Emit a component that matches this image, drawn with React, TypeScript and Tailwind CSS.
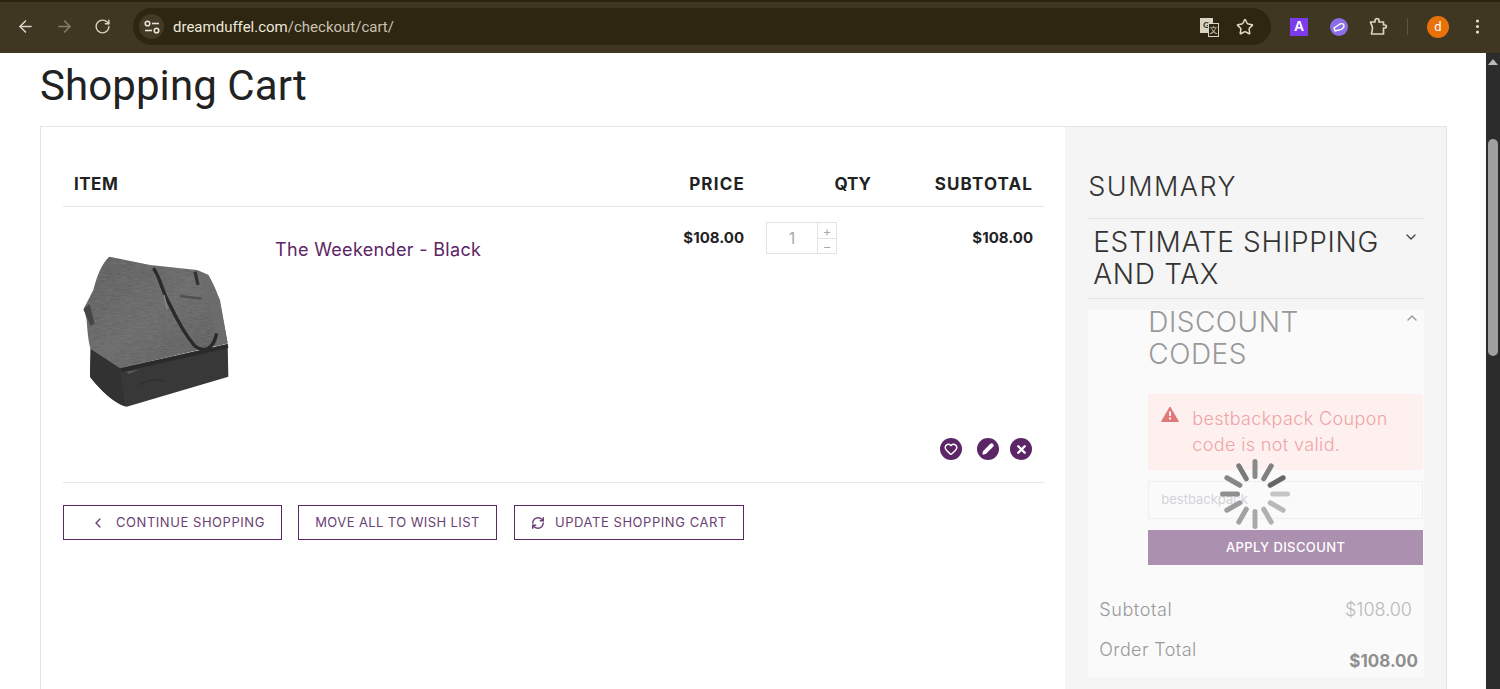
import { FC, ReactNode } from "react"
import { ArrowLeft, ArrowRight, RotateCw, Star, ChevronDown, ChevronUp, ChevronLeft, RefreshCw, Heart, Pencil, X, EllipsisVertical } from "lucide-react"

const mont = "font-['Inter','Open_Sans',sans-serif]"

// drawn in the crop's coordinates, hence the odd viewBox
const BagImage: FC = () => (
  <svg width="150" height="160" viewBox="63 90 450 480">
    <defs>
      <linearGradient id="body" x1="0" y1="0" x2="1" y2="1">
        <stop offset="0" stopColor="#5c5c5c" />
        <stop offset="0.5" stopColor="#6a6a6a" />
        <stop offset="1" stopColor="#5a5a5a" />
      </linearGradient>
      <filter id="heather" x="0" y="0" width="100%" height="100%">
        <feTurbulence type="fractalNoise" baseFrequency="0.05 0.5" numOctaves="2" seed="4" />
        <feColorMatrix values="0 0 0 0 0.25  0 0 0 0 0.25  0 0 0 0 0.25  0.6 0 0 0 -0.15" />
        <feComposite in2="SourceGraphic" operator="in" />
        <feMerge>
          <feMergeNode in="SourceGraphic" />
          <feMergeNode />
        </feMerge>
      </filter>
      <filter id="soft">
        <feGaussianBlur stdDeviation="1.6" />
      </filter>
    </defs>
    <g filter="url(#soft)">
      <path d="M148 110 L270 135 L410 150 L445 165 C465 200 478 230 484 270 L503 370 L180 445 L92 390 C84 360 82 330 80 300 L72 265 L100 210 C110 170 125 130 148 110 Z" fill="url(#body)" filter="url(#heather)" />
      <path d="M410 150 L445 165 L480 240 L503 370 L470 378 C468 310 440 220 410 150 Z" fill="#6c6c6c" />
      <path d="M92 388 L180 445 L503 372 L505 470 L200 560 C170 555 120 510 90 470 Z" fill="#383838" />
      <path d="M180 445 L503 372 L505 384 L185 456 Z" fill="#2a2a2a" />
      <path d="M92 388 L180 445 L195 558 C165 550 120 510 90 470 Z" fill="#303030" />
      <path d="M200 455 L240 448 L205 462 Z" fill="#5a5a5a" />
      <path d="M235 495 C260 480 300 475 315 485" fill="none" stroke="#2c2c2c" strokeWidth="3" />
      <path d="M280 145 C300 170 305 210 325 245 C345 285 370 340 405 378 C430 398 460 390 470 340" fill="none" stroke="#2a2a2a" strokeWidth="10" />
      <path d="M405 155 L414 195" fill="none" stroke="#333" strokeWidth="10" />
      <path d="M360 228 L425 236" fill="none" stroke="#505050" strokeWidth="7" />
      <path d="M312 225 L322 268" fill="none" stroke="#8a8a8a" strokeWidth="4" />
      <path d="M70 268 L88 252 L104 310 L92 318 Z" fill="#444" />
    </g>
  </svg>
)

const bars = [
  { r: 0, c: "#8a8a8a" },
  { r: 30, c: "#808080" },
  { r: 60, c: "#666666" },
  { r: 90, c: "#c6c6c6" },
  { r: 120, c: "#b8b8b8" },
  { r: 150, c: "#b0b0b0" },
  { r: 180, c: "#a9a9a9" },
  { r: 210, c: "#a2a2a2" },
  { r: 240, c: "#9c9c9c" },
  { r: 270, c: "#8f8f8f" },
  { r: 300, c: "#868686" },
  { r: 330, c: "#7a7a7a" },
]

const Spinner: FC = () => (
  <svg width="72" height="72" viewBox="0 0 72 72" className="absolute left-[1219px] top-[458px]">
    {bars.map((b) => (
      <rect key={b.r} x="33.5" y="1" width="5" height="20" rx="2.5" fill={b.c} transform={`rotate(${b.r} 36 36)`} />
    ))}
  </svg>
)

const OutlineButton: FC<{ value: string; icon?: ReactNode; className: string }> = ({ value, icon, className }) => (
  <button className={`h-[35px] border border-[#5b2566] flex items-center text-[13px] text-[#6a3f73] ${className}`}>
    {icon}
    {value}
  </button>
)

const Browser: FC = () => (
  <div className="h-[53px] bg-[#3f3722] flex items-center relative">
    <div className="absolute top-0 left-0 h-[2px] w-full bg-[#2a2410]" />
    <div className="flex items-center w-[133px] pl-[16px] gap-[20px] text-[#d8d3c3]">
      <ArrowLeft size={19} />
      <ArrowRight size={19} className="text-[#857e68]" />
      <RotateCw size={17} />
    </div>
    <div className="h-[37px] w-[1138px] rounded-full bg-[#2e2610] flex items-center pl-[6px]">
      <div className="w-[25px] h-[25px] rounded-full bg-[#423a25] flex items-center justify-center">
        <svg width="16" height="14" viewBox="0 0 16 14" fill="none" stroke="#e6e2d6" strokeWidth="1.6">
          <circle cx="3.5" cy="3.5" r="2.3" />
          <path d="M8 3.5 H15" />
          <path d="M1 10.5 H8" />
          <circle cx="12.5" cy="10.5" r="2.3" />
        </svg>
      </div>
      <span className="ml-[9px] pt-[1px] text-[15px] text-[#c8c3b2] font-['Roboto',sans-serif]">
        <span className="text-[#ece8dc]">dreamduffel.com</span>/checkout/cart/
      </span>
      <div className="ml-auto flex items-center gap-[16px] pr-[17px] text-[#e0dccd]">
        <div className="relative w-[20px] h-[20px] top-[1px]">
          <div className="absolute left-0 top-0 w-[13px] h-[15px] bg-[#d8d3c3] text-[9px] font-bold text-[#3f3722] text-center leading-[15px] font-['Liberation_Sans',sans-serif]">G</div>
          <div className="absolute left-[8px] top-[5px] w-[11px] h-[14px] border border-[#d8d3c3] bg-[#2e2610] text-[8px] text-[#d8d3c3] text-center leading-[12px] font-['Noto_Sans_CJK_SC',sans-serif]">文</div>
        </div>
        <Star size={18} />
      </div>
    </div>
    <div className="ml-[19px] w-[18px] h-[18px] bg-[#7c3aed] text-white text-[14px] font-bold flex items-center justify-center font-['Liberation_Sans',sans-serif]">A</div>
    <div className="ml-[22px] w-[18px] h-[18px] rounded-full bg-[#8b6fe8] flex items-center justify-center">
      <svg width="12" height="10" viewBox="0 0 12 10">
        <path d="M1 6 L7 2 C9 1 11 2 11 4 C11 6 8 8 6 8 L2 9 Z" fill="none" stroke="#fff" strokeWidth="1.4" />
      </svg>
    </div>
    <svg width="19" height="19" viewBox="0 0 19 19" fill="none" stroke="#d8d3c3" strokeWidth="1.7" strokeLinejoin="round" className="ml-[21px]">
      <path d="M1.5 5 H6 V3.5 C6 1 10 1 10 3.5 V5 H14.5 V8 H15.5 C18 8 18 11 15.5 11 H14.5 V17 H2.5 C2.5 15 3.5 14 3.5 11 C3.5 8 1.5 7 1.5 5 Z" />
    </svg>
    <div className="ml-[19px] w-px h-[17px] bg-[#5d5540]" />
    <div className="ml-[19px] w-[22px] h-[22px] rounded-full bg-[#e8710a] text-white text-[13px] flex items-center justify-center font-['Roboto',sans-serif]">d</div>
    <EllipsisVertical size={19} className="ml-[19px] text-[#e0dccd]" />
  </div>
)

const Cart: FC = () => (
  <div className={`w-[1025px] bg-white pt-[37px] pl-[22px] pr-[21px] ${mont}`}>
    <div className="flex items-center h-[43px] border-b border-[#e6e6e6] text-[17px] font-bold text-[#222]">
      <div className="pl-[11px] w-[585px] tracking-[0.5px]">ITEM</div>
      <div className="w-[97px] text-right tracking-[1.2px]">PRICE</div>
      <div className="w-[126px] text-right">QTY</div>
      <div className="w-[162px] text-right tracking-[1.1px]">SUBTOTAL</div>
    </div>
    <div className="flex h-[276px] border-b border-[#e6e6e6] relative">
      <div className="w-[212px] pl-[18px] pt-[43px]">
        <BagImage />
      </div>
      <div className="w-[373px] pt-[29px] text-[#5b2566] text-[18px] tracking-[0.33px]">The Weekender - Black</div>
      <div className="w-[96px] pt-[20px] text-right text-[15px] font-bold text-[#222]">$108.00</div>
      <div className="ml-[22px] mt-[15px] h-[32px] w-[71px] border border-[#e3e3e3] flex">
        <div className="w-[50px] flex items-center justify-center text-[#aaa] text-[16px]">1</div>
        <div className="flex-1 border-l border-[#e3e3e3] flex flex-col text-[#aaa] text-[13px] leading-[14px]">
          <div className="h-[16px] border-b border-[#e3e3e3] flex items-center justify-center">+</div>
          <div className="flex-1 flex items-center justify-center">−</div>
        </div>
      </div>
      <div className="ml-[90px] w-[106px] pt-[20px] text-right text-[15px] font-bold text-[#222]">$108.00</div>
      <div className="absolute right-[12px] top-[231px] flex gap-[13px]">
        <div className="w-[22px] h-[22px] rounded-full bg-[#5b2566] flex items-center justify-center text-white">
          <Heart size={14} strokeWidth={2.5} />
        </div>
        <div className="w-[22px] h-[22px] rounded-full bg-[#5b2566] flex items-center justify-center text-white ml-[2px]">
          <Pencil size={12} strokeWidth={2.5} fill="#fff" />
        </div>
        <div className="w-[22px] h-[22px] rounded-full bg-[#5b2566] flex items-center justify-center text-white -ml-[2px]">
          <X size={13} strokeWidth={4.5} />
        </div>
      </div>
    </div>
    <div className="flex gap-[16px] mt-[22px]">
      <OutlineButton className="w-[219px] pl-[26px] tracking-[0.55px]" value="CONTINUE SHOPPING" icon={<ChevronLeft size={16} className="mr-[10px]" />} />
      <OutlineButton className="w-[199px] justify-center tracking-[0.4px]" value="MOVE ALL TO WISH LIST" />
      <OutlineButton className="ml-[1px] w-[230px] pl-[16px] tracking-[0.55px]" value="UPDATE SHOPPING CART" icon={<RefreshCw size={14} strokeWidth={2.5} className="mr-[10px]" />} />
    </div>
  </div>
)

const Summary: FC = () => (
  <div className={`w-[381px] h-[563px] bg-[#f5f5f5] pl-[23px] pr-[22px] pt-[43px] ${mont}`}>
    <div className="text-[27px] font-light text-[#333] leading-[34px] h-[48px] tracking-[1.5px]">SUMMARY</div>
    <div className="border-t border-[#e4e4e4] border-b h-[81px] pl-[5px] pr-[5px] pt-[7px] flex justify-between">
      <div className="text-[28px] font-light leading-[32px] text-[#333] tracking-[0.7px]">ESTIMATE SHIPPING<br />AND TAX</div>
      <ChevronDown size={16} className="text-[#444] mt-[3px]" />
    </div>
    <div className="bg-[#fafafa] mt-[11px] h-[367px]">
      <div className="flex justify-between pl-[60px] pr-[4px] h-[84px] text-[#999]">
        <div className="-mt-[4px] text-[28px] font-light leading-[32px] tracking-[0.5px]">DISCOUNT<br />CODES</div>
        <ChevronUp size={16} />
      </div>
      <div className="ml-[60px] mr-[1px] h-[76px] bg-[#fff0f0] pt-[12px] pl-[13px] flex">
        <svg width="18" height="16" viewBox="0 0 18 16" className="shrink-0">
          <path d="M9 1 L17.5 15.5 H0.5 Z" fill="#e07a7a" stroke="#e07a7a" strokeLinejoin="round" />
          <path d="M9 5.5 V10" stroke="#fff0f0" strokeWidth="2" />
          <path d="M9 11.5 V13.5" stroke="#fff0f0" strokeWidth="2" />
        </svg>
        <div className="ml-[13px] text-[#eda5a5] text-[18px] leading-[26px] font-light tracking-[0.37px]">bestbackpack Coupon<br />code is not valid.</div>
      </div>
      <div className="ml-[60px] mr-[1px] mt-[11px] h-[38px] border border-[#efefef] flex items-center pl-[12px] text-[13px] text-[#d4d4d8]">bestbackpack</div>
      <div className="ml-[60px] mr-[1px] mt-[11px] h-[35px] bg-[#ac90af] text-white text-[13px] font-medium tracking-[0.4px] flex items-center justify-center">APPLY DISCOUNT</div>
      <div className="mt-[31px] pl-[11px] pr-[12px] flex justify-between text-[18px] font-light text-[#999]">
        <div className="tracking-[0.6px]">Subtotal</div>
        <div className="text-[#b8b8b8]">$108.00</div>
      </div>
      <div className="mt-[13px] pl-[11px] pr-[6px] flex justify-between font-light text-[#999] text-[18px]">
        <div className="tracking-[0.4px]">Order Total</div>
        <div className="font-bold text-[#8f8f8f] text-[17px] mt-[13px]">$108.00</div>
      </div>
    </div>
  </div>
)

export default function App() {
  return (
    <div className="relative w-[1500px] h-[689px] overflow-hidden bg-white">
      <Browser />
      <div className="flex">
        <div className="w-[1486px] pl-[40px]">
          <h1 className="h-[73px] pt-[1px] text-[42px] leading-[64px] tracking-[0.08px] text-[#222] font-['Roboto',sans-serif]">Shopping Cart</h1>
          <div className="w-[1407px] border border-[#e5e5e5] flex">
            <Cart />
            <Summary />
          </div>
        </div>
        <div className="w-[14px] h-[636px] bg-[#2c2c2c] flex flex-col items-center">
          <svg width="10" height="6" viewBox="0 0 10 6" className="mt-[6px]">
            <path d="M5 0 L10 6 H0 Z" fill="#bbb" />
          </svg>
          <div className="mt-[74px] w-[10px] h-[217px] rounded-full bg-[#a0a0a0]" />
        </div>
      </div>
      <Spinner />
    </div>
  )
}
